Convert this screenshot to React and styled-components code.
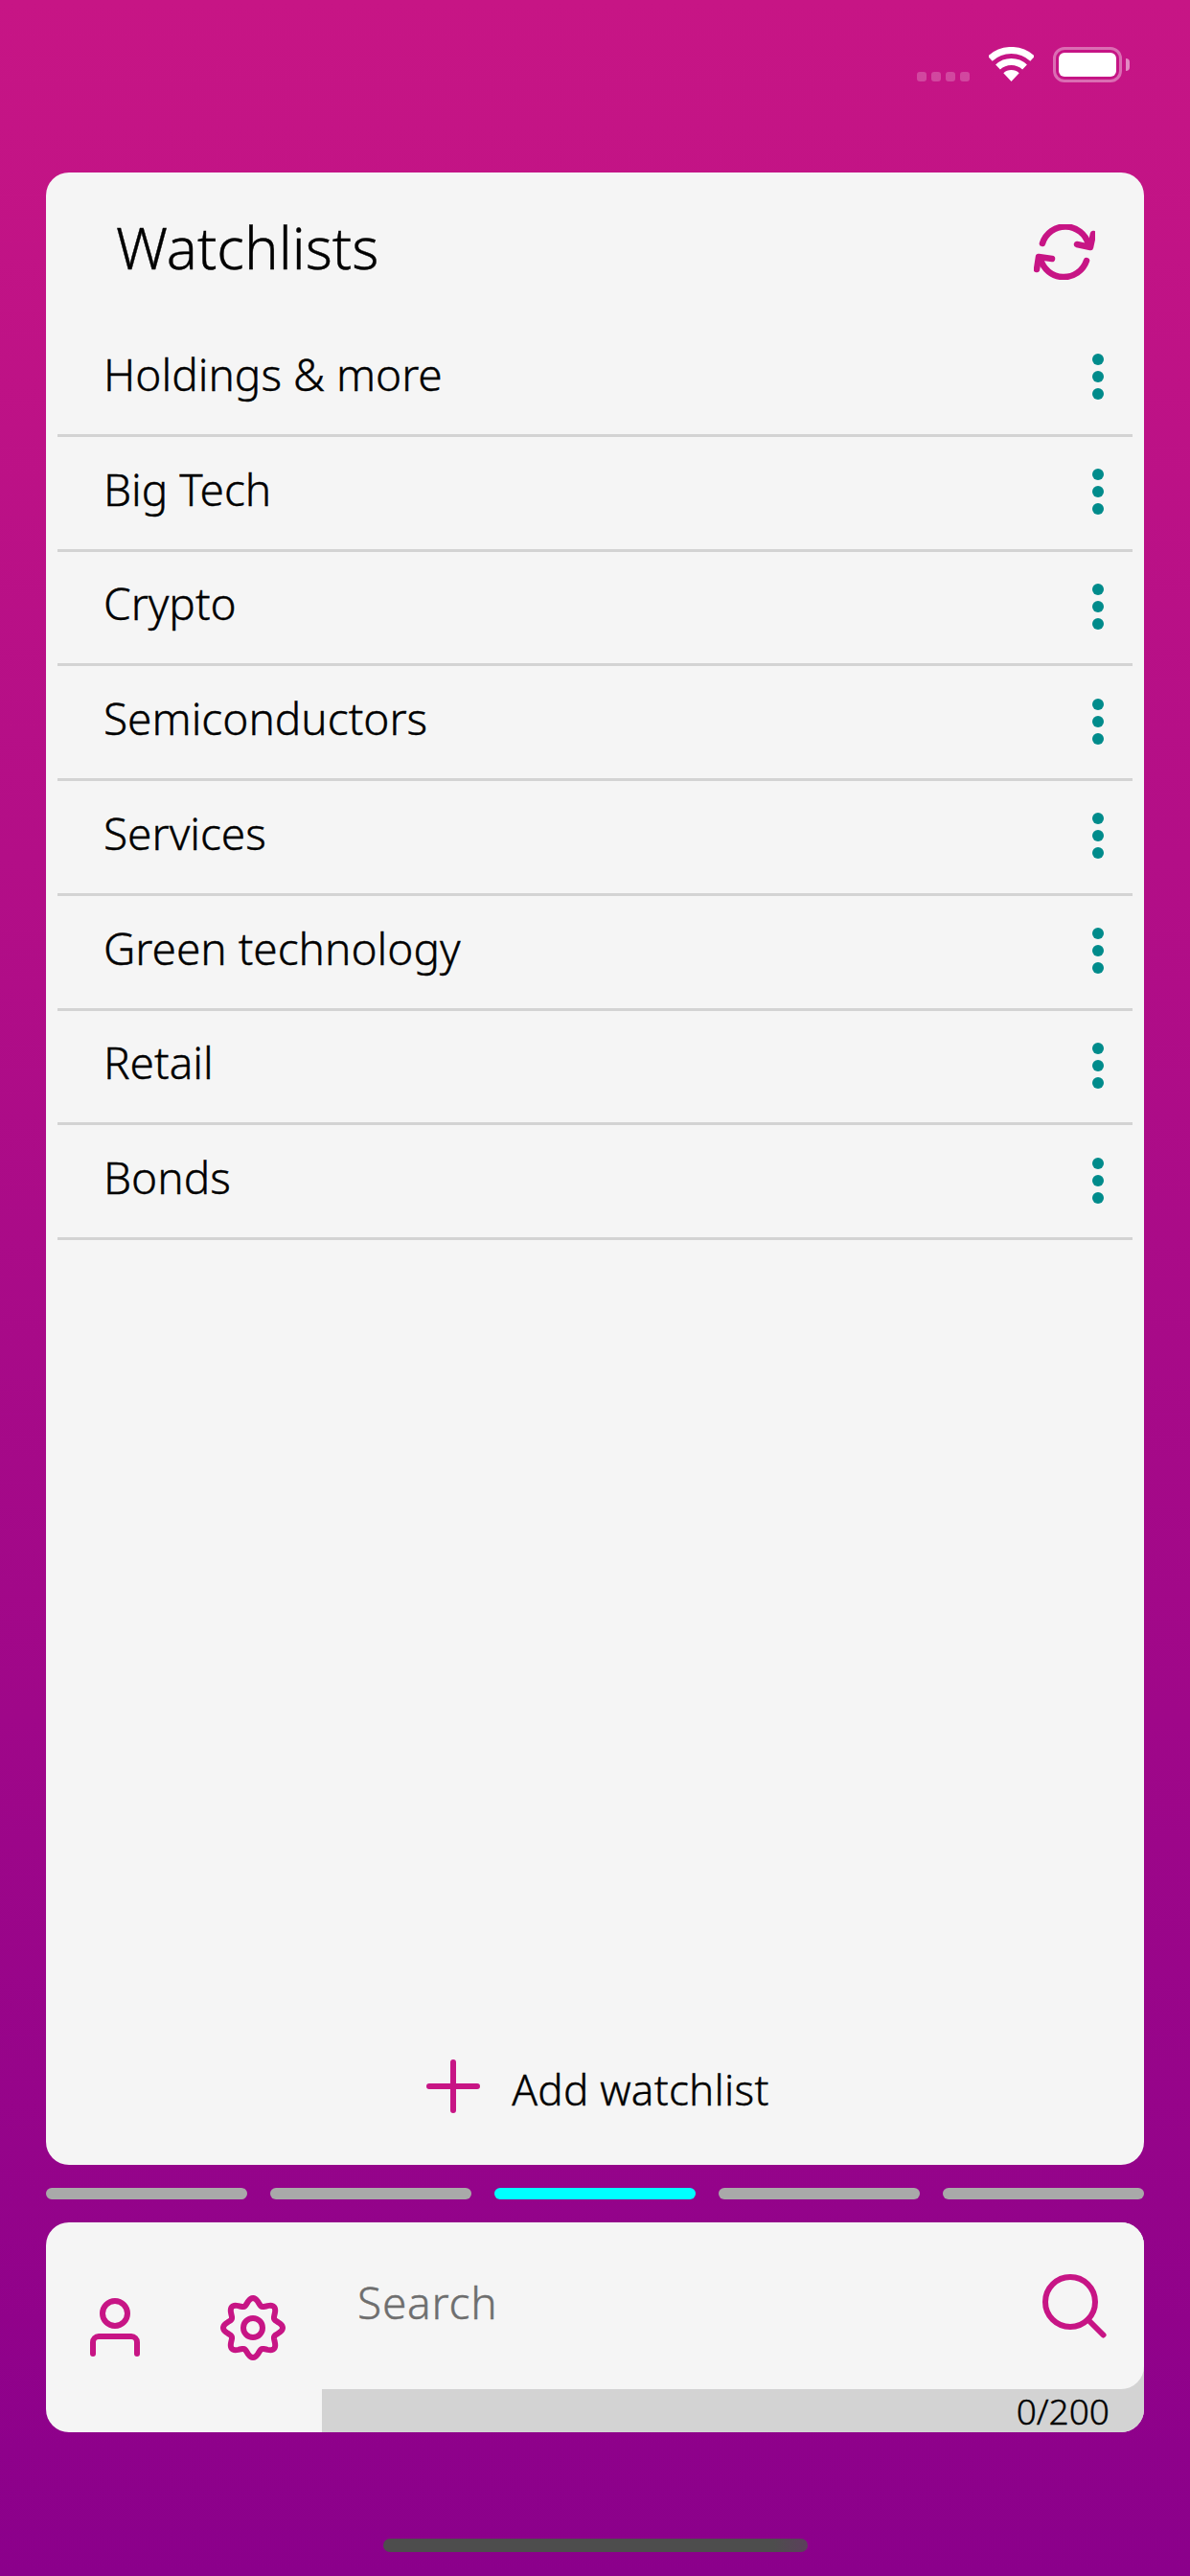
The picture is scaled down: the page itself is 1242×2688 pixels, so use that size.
import React from "react";
import styled, { createGlobalStyle } from "styled-components";

const MAGENTA = "#c71585";
const FONT = `"Noto Sans", "Liberation Sans", sans-serif`;

const GlobalStyle = createGlobalStyle`
  html, body {
    margin: 0;
    padding: 0;
  }
  body {
    font-family: ${FONT};
    font-weight: 300;
    color: #000;
    -webkit-text-stroke: 0.4px currentColor;
  }
`;

const Screen = styled.div`
  width: 1242px;
  height: 2688px;
  box-sizing: border-box;
  display: flex;
  flex-direction: column;
  padding: 0 48px;
  overflow: hidden;
  background: linear-gradient(180deg, #c71585 0%, #8b008b 100%);
`;

const StatusBar = styled.div`
  height: 180px;
  flex: none;
  box-sizing: border-box;
  padding: 49px 16px 0 0;
  display: flex;
  justify-content: flex-end;
  align-items: flex-start;
`;

const Signal = styled.div`
  display: flex;
  gap: 5px;
  margin-top: 26px;
  margin-right: 20px;
`;

const SignalDot = styled.span`
  width: 10px;
  height: 10px;
  border-radius: 3px;
  background: rgba(255, 255, 255, 0.22);
`;

const Battery = styled.div`
  position: relative;
  margin-left: 20px;
  margin-right: 7px;
  width: 72px;
  height: 37px;
  box-sizing: border-box;
  padding: 3px;
  border: 3px solid rgba(255, 255, 255, 0.38);
  border-radius: 12px;

  &::after {
    content: "";
    position: absolute;
    right: -11px;
    top: 9px;
    width: 4px;
    height: 13px;
    border-radius: 0 6px 6px 0;
    background: rgba(255, 255, 255, 0.5);
  }
`;

const BatteryFill = styled.div`
  width: 100%;
  height: 100%;
  border-radius: 6px;
  background: #fff;
`;

const Panel = styled.section`
  height: 2079px;
  flex: none;
  box-sizing: border-box;
  padding: 0 12px;
  display: flex;
  flex-direction: column;
  background: #f5f5f5;
  border-radius: 24px;
`;

const PanelHeader = styled.header`
  height: 156px;
  flex: none;
  box-sizing: border-box;
  padding: 0 39px 0 61px;
  display: flex;
  justify-content: space-between;
  align-items: center;
`;

const Title = styled.h1`
  margin: 0;
  font-size: 60px;
  font-weight: 300;
  line-height: 80px;
`;

const RefreshIcon = styled.svg`
  width: 64px;
  height: 58px;
  margin-top: 10px;
`;

const List = styled.div`
  flex: 1;
`;

const Row = styled.div`
  height: 119.75px;
  box-sizing: border-box;
  padding: 0 30px 0 48px;
  display: flex;
  justify-content: space-between;
  align-items: center;
  border-bottom: 3px solid #d3d3d3;
`;

const RowLabel = styled.span`
  font-size: 46px;
  line-height: 60px;
  margin-bottom: 9px;
`;

const Kebab = styled.div`
  display: flex;
  flex-direction: column;
  gap: 6px;
  margin-bottom: 2px;
`;

const KebabDot = styled.span`
  width: 12px;
  height: 12px;
  border-radius: 50%;
  background: #008b8b;
`;

const AddRow = styled.div`
  height: 117px;
  flex: none;
  box-sizing: border-box;
  padding: 0 0 47px 6px;
  display: flex;
  justify-content: center;
  align-items: center;
  gap: 33px;
`;

const AddLabel = styled.span`
  font-size: 44px;
  line-height: 60px;
  letter-spacing: 0.25px;
  margin-top: 5px;
`;

const Pager = styled.div`
  margin-top: 24px;
  flex: none;
  display: flex;
  gap: 24px;
`;

const PagerBar = styled.span`
  flex: 1;
  height: 12px;
  border-radius: 6px;
  background: ${(p) => (p.$active ? "#00ffff" : "#a9a9a9")};
`;

const BottomCard = styled.section`
  margin-top: 24px;
  height: 219px;
  flex: none;
  display: flex;
  background: #f5f5f5;
  border-radius: 24px;
`;

const Tools = styled.div`
  width: 288px;
  flex: none;
  box-sizing: border-box;
  padding-left: 46px;
  display: flex;
  align-items: center;
  gap: 83px;
`;

const SearchColumn = styled.div`
  flex: 1;
  display: flex;
  flex-direction: column;
  background: #d3d3d3;
  border-radius: 0 24px 24px 0;
`;

const SearchBox = styled.div`
  height: 174px;
  flex: none;
  box-sizing: border-box;
  padding: 0 39px 0 37px;
  display: flex;
  justify-content: space-between;
  align-items: center;
  background: #f5f5f5;
  border-radius: 0 24px 24px 0;
`;

const Placeholder = styled.span`
  font-size: 46px;
  line-height: 60px;
  letter-spacing: 0.8px;
  color: #6e6e6e;
  margin-bottom: 8px;
`;

const Counter = styled.div`
  flex: 1;
  padding-right: 36px;
  text-align: right;
  font-size: 37px;
  line-height: 45px;
`;

const HomeIndicator = styled.div`
  margin: 111px auto 0;
  width: 443px;
  height: 14px;
  flex: none;
  border-radius: 7px;
  background: linear-gradient(90deg, #4d4d4d 92%, #5c3f5c 100%);
`;

const MagnifierIcon = styled.svg`
  width: 67px;
  height: 67px;
  margin-top: 1px;
`;

const WATCHLISTS = [
  "Holdings & more",
  "Big Tech",
  "Crypto",
  "Semiconductors",
  "Services",
  "Green technology",
  "Retail",
  "Bonds",
];

// wavy outline for the settings cog, 8 lobes
function cogPath(cx, cy) {
  const pts = [];
  for (let i = 0; i < 160; i++) {
    const a = (i / 160) * Math.PI * 2;
    const r = 27.5 + 3.5 * Math.cos(8 * a);
    pts.push(`${(cx + r * Math.sin(a)).toFixed(2)} ${(cy - r * Math.cos(a)).toFixed(2)}`);
  }
  return `M${pts.join("L")}Z`;
}

function Wifi() {
  return (
    <svg width="47" height="36" viewBox="0 0 47 36" fill="none" stroke="#fff" strokeWidth="7">
      <path d="M1.3 12.2A32.5 32.5 0 0 1 45.7 12.2" />
      <path d="M9.5 21A20.5 20.5 0 0 1 37.5 21" />
      <path d="M15.3 27.2A12 12 0 0 1 31.7 27.2L23.5 36Z" fill="#fff" stroke="none" />
    </svg>
  );
}

function Refresh() {
  return (
    <RefreshIcon
      viewBox="18 10 64 58"
      fill="none"
      stroke={MAGENTA}
      strokeWidth="6.5"
      strokeLinecap="round"
      strokeLinejoin="round"
    >
      <path d="M27 30A25 25 0 0 1 75 31" />
      <path d="M80 20L77 34L63 31" />
      <path d="M73 48A25 25 0 0 1 25 46" />
      <path d="M21 57L23 44L37 46" />
    </RefreshIcon>
  );
}

function Plus() {
  return (
    <svg width="56" height="56" viewBox="0 0 56 56" stroke={MAGENTA} strokeWidth="6" strokeLinecap="round">
      <path d="M28 3V53M3 28H53" />
    </svg>
  );
}

function Person() {
  return (
    <svg width="52" height="64" viewBox="0 0 52 64" fill="none" stroke={MAGENTA} strokeWidth="6" strokeLinecap="round">
      <circle cx="26" cy="17" r="13" />
      <path d="M3 59V47A6 6 0 0 1 9 41H43A6 6 0 0 1 49 47V59" />
    </svg>
  );
}

function Cog() {
  return (
    <svg width="70" height="70" viewBox="0 0 70 70" fill="none" stroke={MAGENTA} strokeWidth="6">
      <path d={cogPath(35, 35)} />
      <circle cx="35" cy="35" r="10" />
    </svg>
  );
}

function Magnifier() {
  return (
    <MagnifierIcon viewBox="0 0 67 67" fill="none" stroke={MAGENTA} strokeWidth="6" strokeLinecap="round">
      <circle cx="29" cy="29" r="26" />
      <path d="M47.5 47.5L63.5 63.5" />
    </MagnifierIcon>
  );
}

export default function App() {
  return (
    <>
      <GlobalStyle />
      <Screen>
        <StatusBar>
          <Signal>
            <SignalDot />
            <SignalDot />
            <SignalDot />
            <SignalDot />
          </Signal>
          <Wifi />
          <Battery>
            <BatteryFill />
          </Battery>
        </StatusBar>

        <Panel>
          <PanelHeader>
            <Title>Watchlists</Title>
            <Refresh />
          </PanelHeader>
          <List>
            {WATCHLISTS.map((name) => (
              <Row key={name}>
                <RowLabel>{name}</RowLabel>
                <Kebab>
                  <KebabDot />
                  <KebabDot />
                  <KebabDot />
                </Kebab>
              </Row>
            ))}
          </List>
          <AddRow>
            <Plus />
            <AddLabel>Add watchlist</AddLabel>
          </AddRow>
        </Panel>

        <Pager>
          <PagerBar />
          <PagerBar />
          <PagerBar $active />
          <PagerBar />
          <PagerBar />
        </Pager>

        <BottomCard>
          <Tools>
            <Person />
            <Cog />
          </Tools>
          <SearchColumn>
            <SearchBox>
              <Placeholder>Search</Placeholder>
              <Magnifier />
            </SearchBox>
            <Counter>0/200</Counter>
          </SearchColumn>
        </BottomCard>

        <HomeIndicator />
      </Screen>
    </>
  );
}
